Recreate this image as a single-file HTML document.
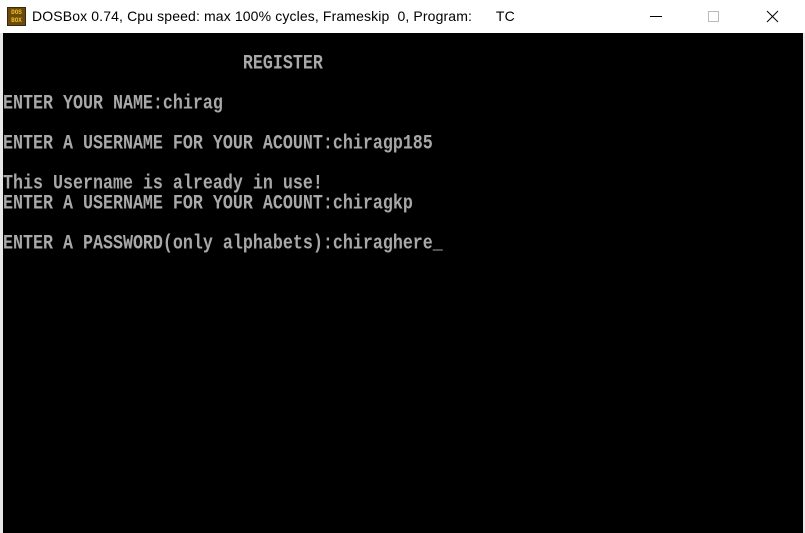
<!DOCTYPE html>
<html><head><style>
body{margin:0;width:805px;height:533px;background:#fff;overflow:hidden;position:relative;font-family:"Liberation Sans",sans-serif}
.tb{position:absolute;left:0;top:0;width:805px;height:33px;background:#fff}
.title{position:absolute;left:32px;top:8px;font-size:14px;color:#000;white-space:pre;letter-spacing:0.13px}
.icon{position:absolute;left:7px;top:7px;width:19px;height:19px;background:#6b4a10;border:1px solid #3a2a05;box-sizing:border-box;color:#f0c020;font:bold 6px "Liberation Mono",monospace;line-height:8px;text-align:center;padding-top:1px}
.scr{position:absolute;left:3px;top:33px;width:800px;height:500px;background:#000}
.ln{position:absolute;left:0;font-family:"Liberation Mono",monospace;font-size:16.67px;color:#a8a8a8;white-space:pre;transform:scaleY(1.2);transform-origin:0 0;font-weight:bold;letter-spacing:0}
.side{position:absolute;top:33px;width:3px;height:500px;background:#fff}
</style></head><body>
<div class="tb">
<div class="icon">DOS<br>BOX</div>
<div class="title">DOSBox 0.74, Cpu speed: max 100% cycles, Frameskip  0, Program:      TC</div>
<svg style="position:absolute;left:620px;top:0" width="185" height="33">
<line x1="30" y1="16.5" x2="42" y2="16.5" stroke="#000" stroke-width="1"/>
<rect x="88.5" y="11.5" width="10" height="10" fill="none" stroke="#bbb"/>
<line x1="147" y1="11" x2="158" y2="22" stroke="#000"/>
<line x1="158" y1="11" x2="147" y2="22" stroke="#000"/>
</svg>
</div>
<div class="scr">
<div class="ln" style="top:20px">                        REGISTER</div>
<div class="ln" style="top:60px">ENTER YOUR NAME:chirag</div>
<div class="ln" style="top:100px">ENTER A USERNAME FOR YOUR ACOUNT:chiragp185</div>
<div class="ln" style="top:140px">This Username is already in use!</div>
<div class="ln" style="top:160px">ENTER A USERNAME FOR YOUR ACOUNT:chiragkp</div>
<div class="ln" style="top:200px">ENTER A PASSWORD(only alphabets):chiraghere_</div>
</div>
<div class="side" style="left:0;background:#e8e8e8"></div>
<div class="side" style="left:803px;background:#e8e8e8;width:2px"></div>
</body></html>
